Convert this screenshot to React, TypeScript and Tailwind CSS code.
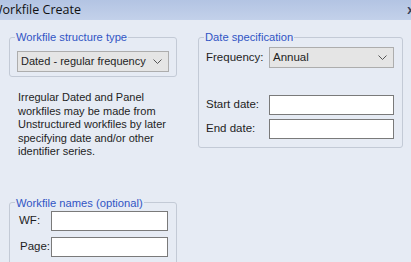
import React from "react";

const Chevron = () => (
  <svg width="9" height="6" viewBox="0 0 9 6" className="text-[#555] shrink-0">
    <path d="M0.5 0.5 L4.5 4.5 L8.5 0.5" fill="none" stroke="currentColor" strokeWidth="1" />
  </svg>
);

const Group: React.FC<{ title: string; className?: string; children: React.ReactNode }> = ({
  title,
  className = "",
  children,
}) => (
  <fieldset className={`border border-[#c3cad6] rounded-[3px] ${className}`}>
    <legend className="ml-[-2px] px-[1px] text-[#3155c4] text-[11.2px] leading-[14px] whitespace-nowrap">{title}</legend>
    {children}
  </fieldset>
);

export default function App() {
  return (
    <div className="w-[411px] h-[262px] overflow-hidden bg-[#e6ebf4] text-[#1e1e1e] text-[11.5px] font-['Liberation_Sans',sans-serif]">
      {/* title bar */}
      <div className="h-[20px] flex items-center justify-between bg-gradient-to-b from-[#b3c4e3] to-[#c3d1ea]">
        <span className="ml-[-9px] text-[12.5px] text-[#111] font-['Open_Sans',sans-serif]">Workfile Create</span>
        <span className="mr-[-3px] text-[12px] font-bold text-[#333d5a]">x</span>
      </div>

      <div className="flex pl-[9px] pt-[10px] gap-[21px]">
        {/* left column */}
        <div className="w-[168px] flex flex-col">
          <Group title="Workfile structure type" className="h-[47px] px-[7px]">
            <div className="mt-[7px] h-[21px] bg-[#e5e5e5] border border-[#adadad] flex items-center justify-between pl-[3px] pr-[6px] whitespace-nowrap text-[11px]">
              <span>Dated - regular frequency</span>
              <Chevron />
            </div>
          </Group>
          <p className="mt-[14px] pl-[9px] text-[11px] leading-[13.5px] whitespace-nowrap">
            Irregular Dated and Panel
            <br />
            workfiles may be made from
            <br />
            Unstructured workfiles by later
            <br />
            specifying date and/or other
            <br />
            identifier series.
          </p>
          <Group title="Workfile names (optional)" className="mt-[37px] h-[70px] px-[7px]">
            <div className="flex items-center gap-[2px] mt-[1px]">
              <span className="w-[32px] pl-[2px]">WF:</span>
              <div className="w-[117px] h-[20px] bg-white border border-[#7a7a7a]" />
            </div>
            <div className="flex items-center gap-[2px] mt-[6px]">
              <span className="w-[32px] pl-[3px]">Page:</span>
              <div className="w-[117px] h-[20px] bg-white border border-[#7a7a7a]" />
            </div>
          </Group>
        </div>

        {/* right column */}
        <div className="w-[205px]">
          <Group title="Date specification" className="h-[118px] px-[7px]">
            <div className="flex items-center mt-[3px]">
              <span className="w-[63px]">Frequency:</span>
              <div className="w-[125px] h-[21px] bg-[#e5e5e5] border border-[#adadad] flex items-center justify-between pl-[3px] pr-[6px]">
                <span>Annual</span>
                <Chevron />
              </div>
            </div>
            <div className="flex items-center mt-[27px]">
              <span className="w-[63px]">Start date:</span>
              <div className="w-[125px] h-[20px] bg-white border border-[#7a7a7a]" />
            </div>
            <div className="flex items-center mt-[4px]">
              <span className="w-[63px]">End date:</span>
              <div className="w-[125px] h-[20px] bg-white border border-[#7a7a7a]" />
            </div>
          </Group>
        </div>
      </div>
    </div>
  );
}
